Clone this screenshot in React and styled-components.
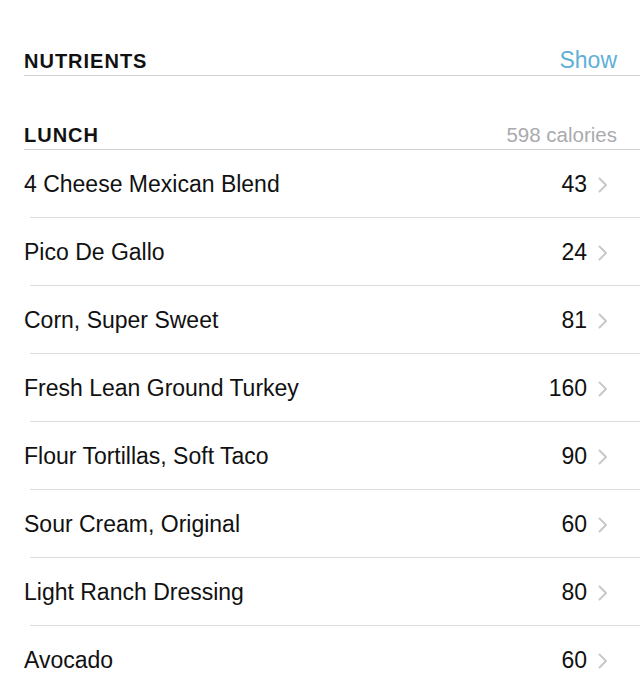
import React from "react";
import styled, { createGlobalStyle } from "styled-components";

const foods = [
  { name: "4 Cheese Mexican Blend", cal: 43 },
  { name: "Pico De Gallo", cal: 24 },
  { name: "Corn, Super Sweet", cal: 81 },
  { name: "Fresh Lean Ground Turkey", cal: 160 },
  { name: "Flour Tortillas, Soft Taco", cal: 90 },
  { name: "Sour Cream, Original", cal: 60 },
  { name: "Light Ranch Dressing", cal: 80 },
  { name: "Avocado", cal: 60 },
];

const Chevron = () => (
  <svg width="10" height="16" viewBox="0 0 10 16">
    <polyline
      points="1.5,1.5 8,8 1.5,14.5"
      fill="none"
      stroke="#c6c6ca"
      strokeWidth="1.8"
      strokeLinecap="round"
      strokeLinejoin="round"
    />
  </svg>
);

const App = () => (
  <>
    <GlobalStyle />
    <Page>
      <Header $top={48}>
        <Title>NUTRIENTS</Title>
        <ShowLink>Show</ShowLink>
      </Header>

      <Header $top={47}>
        <Title>LUNCH</Title>
        <Calories>598 calories</Calories>
      </Header>

      <List>
        {foods.map((f) => (
          <Row key={f.name}>
            <Name>{f.name}</Name>
            <Value>
              {f.cal}
              <Chevron />
            </Value>
          </Row>
        ))}
      </List>
    </Page>
  </>
);

const GlobalStyle = createGlobalStyle`
  html, body {
    margin: 0;
    padding: 0;
    background: #fff;
  }
  body {
    font-family: "Liberation Sans", Arial, sans-serif;
    color: #111;
  }
`;

const Page = styled.div`
  width: 640px;
  height: 688px;
  overflow: hidden;
  background: #fff;
`;

const Header = styled.div`
  display: flex;
  justify-content: space-between;
  align-items: baseline;
  margin-top: ${(p) => p.$top}px;
  margin-left: 24px;
  padding: 0 23px 2px 0;
  border-bottom: 1.5px solid #d2d2d4;
  line-height: 24px;
`;

const Title = styled.div`
  font-size: 20px;
  font-weight: 700;
  letter-spacing: 1px;
  color: #111;
`;

const ShowLink = styled.div`
  font-size: 23px;
  color: #5fb0d8;
`;

const Calories = styled.div`
  font-size: 20.5px;
  color: #aaaaae;
`;

const List = styled.div`
  display: flex;
  flex-direction: column;
`;

const Row = styled.div`
  display: flex;
  align-items: center;
  justify-content: space-between;
  height: 67px;
  padding: 1px 0 0 24px;
  position: relative;
  &::after {
    content: "";
    position: absolute;
    left: 30px;
    right: 0;
    bottom: 0;
    border-bottom: 1px solid #dcdcde;
  }
`;

const Name = styled.div`
  font-size: 23px;
  color: #111;
`;

const Value = styled.div`
  display: flex;
  align-items: center;
  gap: 11px;
  padding-right: 32px;
  font-size: 23px;
  color: #111;
  svg {
    margin-top: 1px;
  }
`;

export default App;
